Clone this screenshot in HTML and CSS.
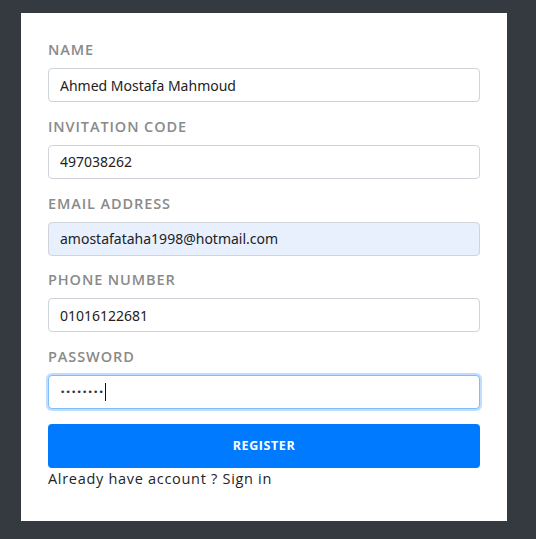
FILE: index.html
```html
<!DOCTYPE html>
<html>
<head>
<meta charset="utf-8">
<link rel="stylesheet" href="styles.css">
</head>
<body>
<form class="card">
  <div class="group">
    <label class="label">NAME</label>
    <input class="field" type="text" value="Ahmed Mostafa Mahmoud">
  </div>
  <div class="group">
    <label class="label">INVITATION CODE</label>
    <input class="field" type="text" value="497038262">
  </div>
  <div class="group">
    <label class="label">EMAIL ADDRESS</label>
    <input class="field autofill" type="text" value="amostafataha1998@hotmail.com">
  </div>
  <div class="group">
    <label class="label">PHONE NUMBER</label>
    <input class="field" type="text" value="01016122681">
  </div>
  <div class="group">
    <label class="label">PASSWORD</label>
    <div class="field focused"><span class="dots">••••••••</span><span class="caret"></span></div>
  </div>
  <button class="btn" type="button">REGISTER</button>
  <p class="signin">Already have account ? Sign in</p>
</form>
</body>
</html>
```
FILE: styles.css
```css
html, body {
  margin: 0;
  padding: 0;
}
body {
  background: #343a40;
  width: 536px;
  height: 539px;
  overflow: hidden;
  font-family: "Open Sans", "Liberation Sans", sans-serif;
}
.card {
  background: #ffffff;
  margin: 13px 0 0 21px;
  width: 486px;
  box-sizing: border-box;
  padding: 27px 27px 31px 27px;
  display: flex;
  flex-direction: column;
}
.group {
  display: flex;
  flex-direction: column;
  margin-bottom: 14.75px;
}
.label {
  font-size: 14.5px;
  font-weight: 600;
  line-height: 20px;
  color: #8a8a8a;
  letter-spacing: 0.9px;
  margin-bottom: 8px;
}
.field {
  height: 34px;
  width: 432px;
  box-sizing: border-box;
  border: 1px solid #ced4da;
  border-radius: 4px;
  padding: 0 11px;
  font-family: "Noto Sans", sans-serif;
  font-size: 14px;
  color: #222;
  background: #fff;
  outline: none;
  margin: 0;
}
.autofill {
  background: #e8f0fe;
}
.focused {
  border-color: #80bdff;
  box-shadow: 0 0 0 2px rgba(0, 123, 255, 0.25);
  display: flex;
  align-items: center;
}
.dots {
  font-family: "DejaVu Sans", sans-serif;
  font-size: 9px;
  letter-spacing: 0.2px;
  color: #333;
}
.caret {
  display: inline-block;
  width: 1px;
  height: 18px;
  background: #111;
  margin-left: 1px;
}
.btn {
  height: 44px;
  width: 432px;
  border: none;
  border-radius: 4px;
  background: #007bff;
  color: #fff;
  font-family: "Open Sans", sans-serif;
  font-weight: 700;
  font-size: 12.5px;
  letter-spacing: 0.6px;
  margin: 0;
  padding: 0;
}
.signin {
  margin: 0;
  font-size: 14.5px;
  line-height: 22px;
  color: #212529;
  letter-spacing: 0.7px;
}
```
